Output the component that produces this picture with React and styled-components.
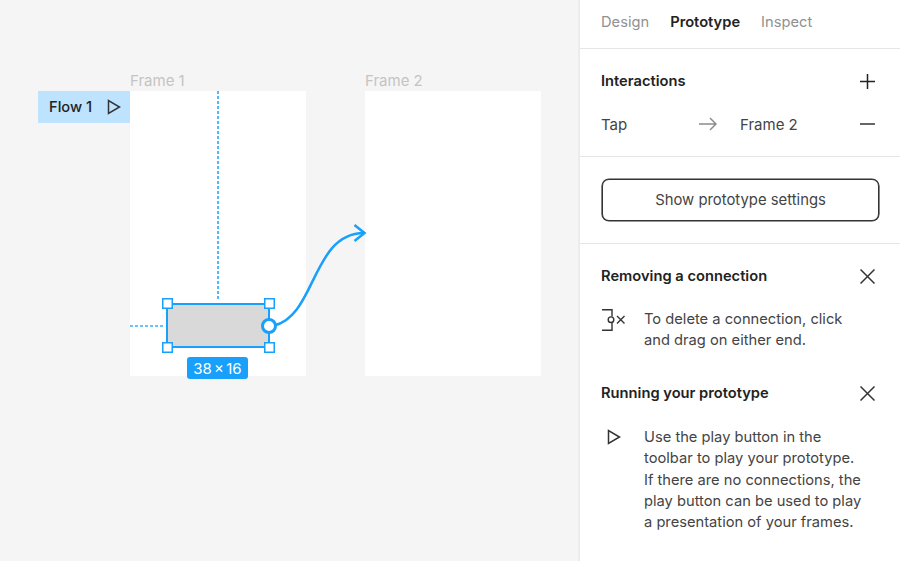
import React from 'react';
import styled, { createGlobalStyle } from 'styled-components';

const GlobalStyle = createGlobalStyle`
  html, body {
    margin: 0;
    padding: 0;
    background: #fff;
  }
  body {
    font-family: Inter, "Liberation Sans", sans-serif;
  }
`;

const blue = '#18a0fb';

const Page = styled.div`
  display: flex;
  width: 900px;
  height: 561px;
  overflow: hidden;
`;

const Canvas = styled.div`
  position: relative;
  width: 578px;
  flex-shrink: 0;
  background: #f5f5f5;
`;

const Frame = styled.div`
  position: absolute;
  left: ${props => props.x}px;
  top: 91px;
  width: 176px;
  height: 285px;
  background: #fff;
`;

const FrameLabel = styled.span`
  position: absolute;
  left: 0;
  top: -20px;
  font-size: 15px;
  line-height: 20px;
  color: #c4c4c4;
`;

const FlowTag = styled.div`
  position: absolute;
  left: 38px;
  top: 91px;
  width: 92px;
  height: 32px;
  box-sizing: border-box;
  padding-left: 11px;
  display: flex;
  align-items: center;
  gap: 15px;
  background: #bde3ff;
  font-size: 14.7px;
  font-weight: 500;
  color: #222;
`;

const GuideV = styled.div`
  position: absolute;
  left: 87px;
  top: 0;
  width: 2px;
  height: 210px;
  opacity: 0.75;
  background: repeating-linear-gradient(to bottom, ${blue} 0 3px, transparent 3px 5px);
`;

const GuideH = styled.div`
  position: absolute;
  left: 0;
  top: 234px;
  width: 35px;
  height: 2px;
  opacity: 0.65;
  background: repeating-linear-gradient(to right, ${blue} 0 3px, transparent 3px 5px);
`;

const Selection = styled.div`
  position: absolute;
  left: 166px;
  top: 303px;
  width: 104px;
  height: 45px;
  box-sizing: border-box;
  background: #d9d9d9;
  border: 2px solid ${blue};
`;

const Handle = styled.span`
  position: absolute;
  width: 11px;
  height: 11px;
  box-sizing: border-box;
  background: #fff;
  border: 1px solid ${blue};
  box-shadow: inset 0 0 0 0.5px ${blue};
  ${props => (props.right ? 'right: -7px;' : 'left: -6px;')}
  ${props => (props.bottom ? 'bottom: -7px;' : 'top: -7px;')}
`;

const Port = styled.span`
  position: absolute;
  right: -9px;
  top: 13px;
  width: 16px;
  height: 16px;
  box-sizing: border-box;
  border-radius: 50%;
  background: #fff;
  border: 3px solid ${blue};
`;

const SizeBadge = styled.div`
  position: absolute;
  left: 187px;
  top: 357px;
  width: 61px;
  height: 22px;
  display: flex;
  align-items: center;
  justify-content: center;
  border-radius: 3px;
  background: ${blue};
  color: #fff;
  font-size: 15px;
  word-spacing: -2px;
  line-height: 1;
`;

const Connector = styled.svg`
  position: absolute;
  left: 0;
  top: 0;
  pointer-events: none;
`;

const Panel = styled.aside`
  width: 322px;
  flex-shrink: 0;
  box-sizing: border-box;
  background: #fff;
  border-left: 2px solid #ececec;
`;

const Tabs = styled.nav`
  display: flex;
  align-items: center;
  gap: 21px;
  height: 43px;
  padding: 0 21px 5px;
  border-bottom: 1px solid #e6e6e6;
`;

const Tab = styled.span`
  font-size: 14.7px;
  font-weight: ${props => (props.active ? 600 : 400)};
  color: ${props => (props.active ? '#222' : '#919191')};
`;

const Section = styled.section`
  padding: ${props => props.pad};
  border-bottom: ${props => (props.divided ? '1px solid #e6e6e6' : 'none')};
`;

const HeadRow = styled.div`
  display: flex;
  align-items: center;
  justify-content: space-between;
  height: 24px;
`;

const Heading = styled.h3`
  margin: 0;
  font-size: 14.7px;
  line-height: 25px;
  font-weight: 600;
  color: #222;
`;

const InteractionRow = styled.div`
  display: flex;
  align-items: center;
  height: 24px;
  margin-top: 19px;
  font-size: 15px;
  color: #444;
`;

const Trigger = styled.span`
  width: 98px;
`;

const Target = styled.span`
  flex: 1;
  margin-left: 23px;
`;

const OutlineButton = styled.button`
  display: block;
  width: 277px;
  height: 42px;
  margin-left: 1px;
  box-sizing: border-box;
  border: 1px solid #333;
  box-shadow: 0 0 0 0.6px #333;
  border-radius: 7px;
  background: #fff;
  font-family: inherit;
  font-size: 14.85px;
  color: #444;
`;

const Tip = styled.div`
  display: grid;
  grid-template-columns: 43px 1fr;
  margin-top: 21px;
`;

const TipText = styled.p`
  margin: 0;
  font-size: 14.7px;
  line-height: 21.4px;
  color: #444;
  width: 222px;
`;

const Icon = styled.svg`
  display: block;
  flex-shrink: 0;
  fill: none;
  stroke: ${props => props.color || '#333'};
  stroke-width: ${props => props.weight || 1.5};
`;

const ConnectionIcon = styled(Icon)`
  margin-left: 1px;
`;

const TipPlay = styled(Icon)`
  margin: 2px 0 0 6px;
`;

const Play = () => (
  <Icon width="14" height="16" viewBox="0 0 14 16">
    <path d="M1.5 1.5V14.5L12.5 8Z" />
  </Icon>
);

const Cross = () => (
  <Icon width="15" height="15" viewBox="0 0 15 15">
    <path d="M0.5 0.5L14.5 14.5M14.5 0.5L0.5 14.5" />
  </Icon>
);

const App = () => (
  <Page>
    <GlobalStyle />
    <Canvas>
      <Frame x={130}>
        <FrameLabel>Frame 1</FrameLabel>
        <GuideV />
        <GuideH />
      </Frame>
      <Frame x={365}>
        <FrameLabel>Frame 2</FrameLabel>
      </Frame>
      <FlowTag>
        Flow 1
        <Play />
      </FlowTag>
      <Connector width="578" height="561" viewBox="0 0 578 561" fill="none">
        <path d="M274 325.5C316 316 312 233 364 233" stroke={blue} strokeWidth="2.5" />
        <path d="M354.5 225L364.5 233L354.5 241" stroke={blue} strokeWidth="2.5" />
      </Connector>
      <Selection>
        <Handle />
        <Handle right />
        <Handle bottom />
        <Handle right bottom />
        <Port />
      </Selection>
      <SizeBadge>38 × 16</SizeBadge>
    </Canvas>
    <Panel>
      <Tabs>
        <Tab>Design</Tab>
        <Tab active>Prototype</Tab>
        <Tab>Inspect</Tab>
      </Tabs>
      <Section divided pad="20px 25px 20px 21px">
        <HeadRow>
          <Heading>Interactions</Heading>
          <Icon width="15" height="15" viewBox="0 0 15 15" color="#222">
            <path d="M7.5 0V15M0 7.5H15" />
          </Icon>
        </HeadRow>
        <InteractionRow>
          <Trigger>Tap</Trigger>
          <Icon width="18" height="14" viewBox="0 0 18 14" color="#8c8c8c">
            <path d="M0 7H17M11 1L17 7L11 13" />
          </Icon>
          <Target>Frame 2</Target>
          <Icon width="15" height="2" viewBox="0 0 15 2" color="#333">
            <path d="M0 1H15" />
          </Icon>
        </InteractionRow>
      </Section>
      <Section divided pad="22px 21px 22px">
        <OutlineButton>Show prototype settings</OutlineButton>
      </Section>
      <Section pad="20px 25px 0 21px">
        <HeadRow>
          <Heading>Removing a connection</Heading>
          <Cross />
        </HeadRow>
        <Tip>
          <ConnectionIcon width="24" height="22" viewBox="0 0 24 22" weight="1.4">
            <path d="M0 0.7H10V7.5M10 14V21.3H0" />
            <circle cx="9" cy="10.7" r="2.8" />
            <path d="M15 7L22.5 14.5M22.5 7L15 14.5" />
          </ConnectionIcon>
          <TipText>To delete a connection, click and drag on either end.</TipText>
        </Tip>
      </Section>
      <Section pad="30px 25px 0 21px">
        <HeadRow>
          <Heading>Running your prototype</Heading>
          <Cross />
        </HeadRow>
        <Tip>
          <TipPlay width="14" height="16" viewBox="0 0 14 16">
            <path d="M1.5 1.5V14.5L12.5 8Z" />
          </TipPlay>
          <TipText>
            Use the play button in the toolbar to play your prototype. If there are no connections, the play button can be used to play a presentation of your frames.
          </TipText>
        </Tip>
      </Section>
    </Panel>
  </Page>
);

export default App;
